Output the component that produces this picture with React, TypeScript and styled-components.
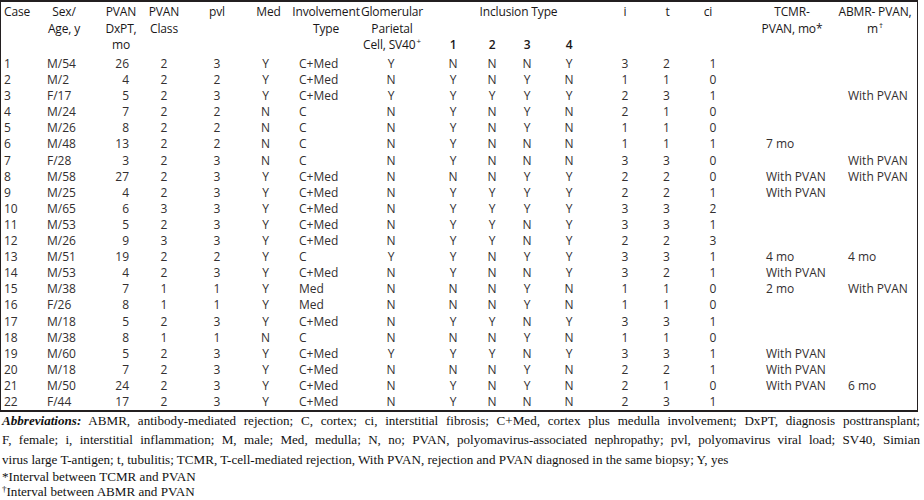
import React from 'react';
import styled, { createGlobalStyle } from 'styled-components';

const GlobalStyle = createGlobalStyle`
  html, body { margin: 0; padding: 0; background: #ffffff; }
  body { width: 924px; height: 500px; overflow: hidden; }
`;

type Align = 'left' | 'center' | 'right';

interface ColSpec {
  w: number;
  head: Align;
  headPad: number;
  data: Align;
  dataPad: number;
}

const COLS: ColSpec[] = [
  { w: 39, head: 'left', headPad: 3, data: 'left', dataPad: 3 },
  { w: 52, head: 'center', headPad: -2, data: 'left', dataPad: 7 },
  { w: 50, head: 'center', headPad: 4, data: 'right', dataPad: 13 },
  { w: 48, head: 'center', headPad: -2, data: 'center', dataPad: -2 },
  { w: 51, head: 'center', headPad: 1.5, data: 'center', dataPad: 1.5 },
  { w: 55, head: 'center', headPad: 0, data: 'center', dataPad: -3 },
  { w: 63, head: 'center', headPad: -1.5, data: 'left', dataPad: 3 },
  { w: 63, head: 'center', headPad: 1.5, data: 'center', dataPad: 0.5 },
  { w: 50, head: 'center', headPad: 6, data: 'center', dataPad: 6 },
  { w: 37, head: 'center', headPad: 1.5, data: 'center', dataPad: 1.5 },
  { w: 39, head: 'center', headPad: -1.5, data: 'center', dataPad: -1.5 },
  { w: 49, head: 'center', headPad: -3.5, data: 'center', dataPad: -3.5 },
  { w: 49, head: 'center', headPad: 3.5, data: 'center', dataPad: 3.5 },
  { w: 43, head: 'center', headPad: 0, data: 'center', dataPad: -1 },
  { w: 62, head: 'center', headPad: -12, data: 'center', dataPad: -7 },
  { w: 82, head: 'center', headPad: 0, data: 'left', dataPad: 15 },
  { w: 84, head: 'center', headPad: 0, data: 'left', dataPad: 15 },
];

const ROWS: string[][] = [
  ['1', 'M/54', '26', '2', '3', 'Y', 'C+Med', 'Y', 'N', 'N', 'N', 'Y', '3', '2', '1', '', ''],
  ['2', 'M/2', '4', '2', '2', 'Y', 'C+Med', 'N', 'Y', 'N', 'Y', 'N', '1', '1', '0', '', ''],
  ['3', 'F/17', '5', '2', '3', 'Y', 'C+Med', 'Y', 'Y', 'Y', 'Y', 'Y', '2', '3', '1', '', 'With PVAN'],
  ['4', 'M/24', '7', '2', '2', 'N', 'C', 'N', 'Y', 'N', 'Y', 'N', '2', '1', '0', '', ''],
  ['5', 'M/26', '8', '2', '2', 'N', 'C', 'N', 'Y', 'N', 'Y', 'N', '1', '1', '0', '', ''],
  ['6', 'M/48', '13', '2', '2', 'N', 'C', 'N', 'Y', 'N', 'N', 'N', '1', '1', '1', '7 mo', ''],
  ['7', 'F/28', '3', '2', '3', 'N', 'C', 'N', 'Y', 'N', 'N', 'N', '3', '3', '0', '', 'With PVAN'],
  ['8', 'M/58', '27', '2', '3', 'Y', 'C+Med', 'N', 'N', 'N', 'Y', 'Y', '2', '2', '0', 'With PVAN', 'With PVAN'],
  ['9', 'M/25', '4', '2', '3', 'Y', 'C+Med', 'N', 'Y', 'Y', 'Y', 'Y', '2', '2', '1', 'With PVAN', ''],
  ['10', 'M/65', '6', '3', '3', 'Y', 'C+Med', 'N', 'Y', 'Y', 'Y', 'Y', '3', '3', '2', '', ''],
  ['11', 'M/53', '5', '2', '3', 'Y', 'C+Med', 'N', 'Y', 'Y', 'N', 'Y', '3', '3', '1', '', ''],
  ['12', 'M/26', '9', '3', '3', 'Y', 'C+Med', 'N', 'Y', 'Y', 'N', 'Y', '2', '2', '3', '', ''],
  ['13', 'M/51', '19', '2', '2', 'Y', 'C', 'Y', 'Y', 'N', 'Y', 'Y', '3', '3', '1', '4 mo', '4 mo'],
  ['14', 'M/53', '4', '2', '3', 'Y', 'C+Med', 'N', 'Y', 'N', 'N', 'Y', '3', '2', '1', 'With PVAN', ''],
  ['15', 'M/38', '7', '1', '1', 'Y', 'Med', 'N', 'N', 'N', 'Y', 'N', '1', '1', '0', '2 mo', 'With PVAN'],
  ['16', 'F/26', '8', '1', '1', 'Y', 'Med', 'N', 'N', 'N', 'Y', 'N', '1', '1', '0', '', ''],
  ['17', 'M/18', '5', '2', '3', 'Y', 'C+Med', 'N', 'Y', 'Y', 'N', 'Y', '3', '3', '1', '', ''],
  ['18', 'M/38', '8', '1', '1', 'N', 'C', 'N', 'N', 'N', 'Y', 'N', '1', '1', '0', '', ''],
  ['19', 'M/60', '5', '2', '3', 'Y', 'C+Med', 'Y', 'Y', 'Y', 'N', 'Y', '3', '3', '1', 'With PVAN', ''],
  ['20', 'M/18', '7', '2', '3', 'Y', 'C+Med', 'N', 'N', 'N', 'Y', 'N', '2', '2', '1', 'With PVAN', ''],
  ['21', 'M/50', '24', '2', '3', 'Y', 'C+Med', 'N', 'Y', 'N', 'Y', 'N', '2', '1', '0', 'With PVAN', '6 mo'],
  ['22', 'F/44', '17', '2', '3', 'Y', 'C+Med', 'N', 'Y', 'N', 'N', 'N', '2', '3', '1', '', ''],
];

const TEMPLATE = COLS.map((c) => `${c.w}px`).join(' ');

const Page = styled.div`
  width: 924px;
  height: 500px;
  display: flex;
  flex-direction: column;
  color: #231f20;
`;

const TableBox = styled.div`
  width: 918px;
  box-sizing: border-box;
  border-top: 2px solid #231f20;
  border-bottom: 2px solid #231f20;
  border-left: 1px solid #231f20;
  border-right: 1px solid #231f20;
  font-family: "Open Sans", "Noto Sans", sans-serif;
  font-size: 12px;
`;

const Head = styled.div`
  display: grid;
  grid-template-columns: ${TEMPLATE};
  grid-template-rows: 16.5px 16.5px 16.5px;
  padding: 2px 0 2.5px;
  line-height: 16.5px;
  color: #1a1718;
  letter-spacing: -0.15px;
`;

const Body = styled.div`
  display: flex;
  flex-direction: column;
`;

const Row = styled.div`
  display: grid;
  grid-template-columns: ${TEMPLATE};
  height: 16.1px;
  line-height: 16.1px;
  color: #332f30;
`;

const Cell = styled.div<{ $align: Align; $pad: number }>`
  display: flex;
  flex-direction: column;
  align-items: ${(p) => (p.$align === 'left' ? 'flex-start' : p.$align === 'right' ? 'flex-end' : 'center')};
  padding-left: ${(p) => (p.$align === 'left' ? p.$pad : p.$align === 'center' ? Math.max(0, 2 * p.$pad) : 0)}px;
  padding-right: ${(p) => (p.$align === 'right' ? p.$pad : p.$align === 'center' ? Math.max(0, -2 * p.$pad) : 0)}px;
  white-space: nowrap;
  min-width: 0;
`;

const HeadCell = styled(Cell)<{ $col: number; $span?: number; $rows?: string; $strong?: boolean }>`
  grid-column: ${(p) => p.$col} / span ${(p) => p.$span ?? 1};
  grid-row: ${(p) => p.$rows ?? '1 / 4'};
  font-weight: ${(p) => (p.$strong ? 600 : 400)};
`;

const Sup = styled.sup`
  font-size: 8px;
  line-height: 0;
  vertical-align: 0;
  position: relative;
  top: -5px;
  margin-left: 1px;
`;

const Notes = styled.div`
  font-family: "Liberation Serif", "DejaVu Serif", serif;
  font-size: 13.1px;
  color: #111;
  width: 920px;
  margin-top: -1px;
  padding-left: 2px;
  box-sizing: border-box;
`;

const NoteLine = styled.div<{ $justify?: boolean }>`
  line-height: 19.3px;
  white-space: nowrap;
  text-align: ${(p) => (p.$justify ? 'justify' : 'left')};
  text-align-last: ${(p) => (p.$justify ? 'justify' : 'auto')};
`;

const Foot = styled.div`
  line-height: 15.5px;
`;

const Lead = styled.span`
  font-weight: 700;
  font-style: italic;
`;

const NoteMark = styled.sup`
  font-size: 9px;
  line-height: 0;
  vertical-align: 0;
  position: relative;
  top: -4px;
`;

const head = (i: number, content: React.ReactNode[], extra?: { rows?: string; span?: number; pad?: number; strong?: boolean }) => {
  const c = COLS[i];
  return (
    <HeadCell
      key={`h${i}-${extra?.rows ?? ''}`}
      $col={i + 1}
      $span={extra?.span}
      $rows={extra?.rows}
      $align={c.head}
      $pad={extra?.pad ?? c.headPad}
      $strong={extra?.strong}
    >
      {content.map((line, k) => (
        <span key={k}>{line}</span>
      ))}
    </HeadCell>
  );
};

export default function App() {
  return (
    <>
      <GlobalStyle />
      <Page>
        <TableBox>
          <Head>
            {head(0, ['Case'])}
            {head(1, ['Sex/', 'Age, y'])}
            {head(2, ['PVAN', 'DxPT,', 'mo'])}
            {head(3, ['PVAN', 'Class'])}
            {head(4, ['pvl'])}
            {head(5, ['Med'])}
            {head(6, ['Involvement', 'Type'])}
            {head(7, ['Glomerular', 'Parietal', <>Cell, SV40<Sup>+</Sup></>])}
            {head(8, ['Inclusion Type'], { rows: '1 / 2', span: 4, pad: 9 })}
            {head(8, ['1'], { rows: '3 / 4', strong: true })}
            {head(9, ['2'], { rows: '3 / 4', strong: true })}
            {head(10, ['3'], { rows: '3 / 4', strong: true })}
            {head(11, ['4'], { rows: '3 / 4', strong: true })}
            {head(12, ['i'])}
            {head(13, ['t'])}
            {head(14, ['ci'])}
            {head(15, ['TCMR-', 'PVAN, mo*'])}
            {head(16, ['ABMR- PVAN,', <>m<Sup>†</Sup></>])}
          </Head>
          <Body>
            {ROWS.map((r) => (
              <Row key={r[0]}>
                {r.map((v, i) => (
                  <Cell key={i} $align={COLS[i].data} $pad={COLS[i].dataPad}>
                    {v}
                  </Cell>
                ))}
              </Row>
            ))}
          </Body>
        </TableBox>
        <Notes>
          <NoteLine $justify>
            <Lead>Abbreviations:</Lead> ABMR, antibody-mediated rejection; C, cortex; ci, interstitial fibrosis; C+Med, cortex plus medulla involvement; DxPT, diagnosis posttransplant;
          </NoteLine>
          <NoteLine $justify>
            F, female; i, interstitial inflammation; M, male; Med, medulla; N, no; PVAN, polyomavirus-associated nephropathy; pvl, polyomavirus viral load; SV40, Simian
          </NoteLine>
          <NoteLine>
            virus large T-antigen; t, tubulitis; TCMR, T-cell-mediated rejection, With PVAN, rejection and PVAN diagnosed in the same biopsy; Y, yes
          </NoteLine>
          <Foot>*Interval between TCMR and PVAN</Foot>
          <Foot>
            <NoteMark>†</NoteMark>Interval between ABMR and PVAN
          </Foot>
        </Notes>
      </Page>
    </>
  );
}
